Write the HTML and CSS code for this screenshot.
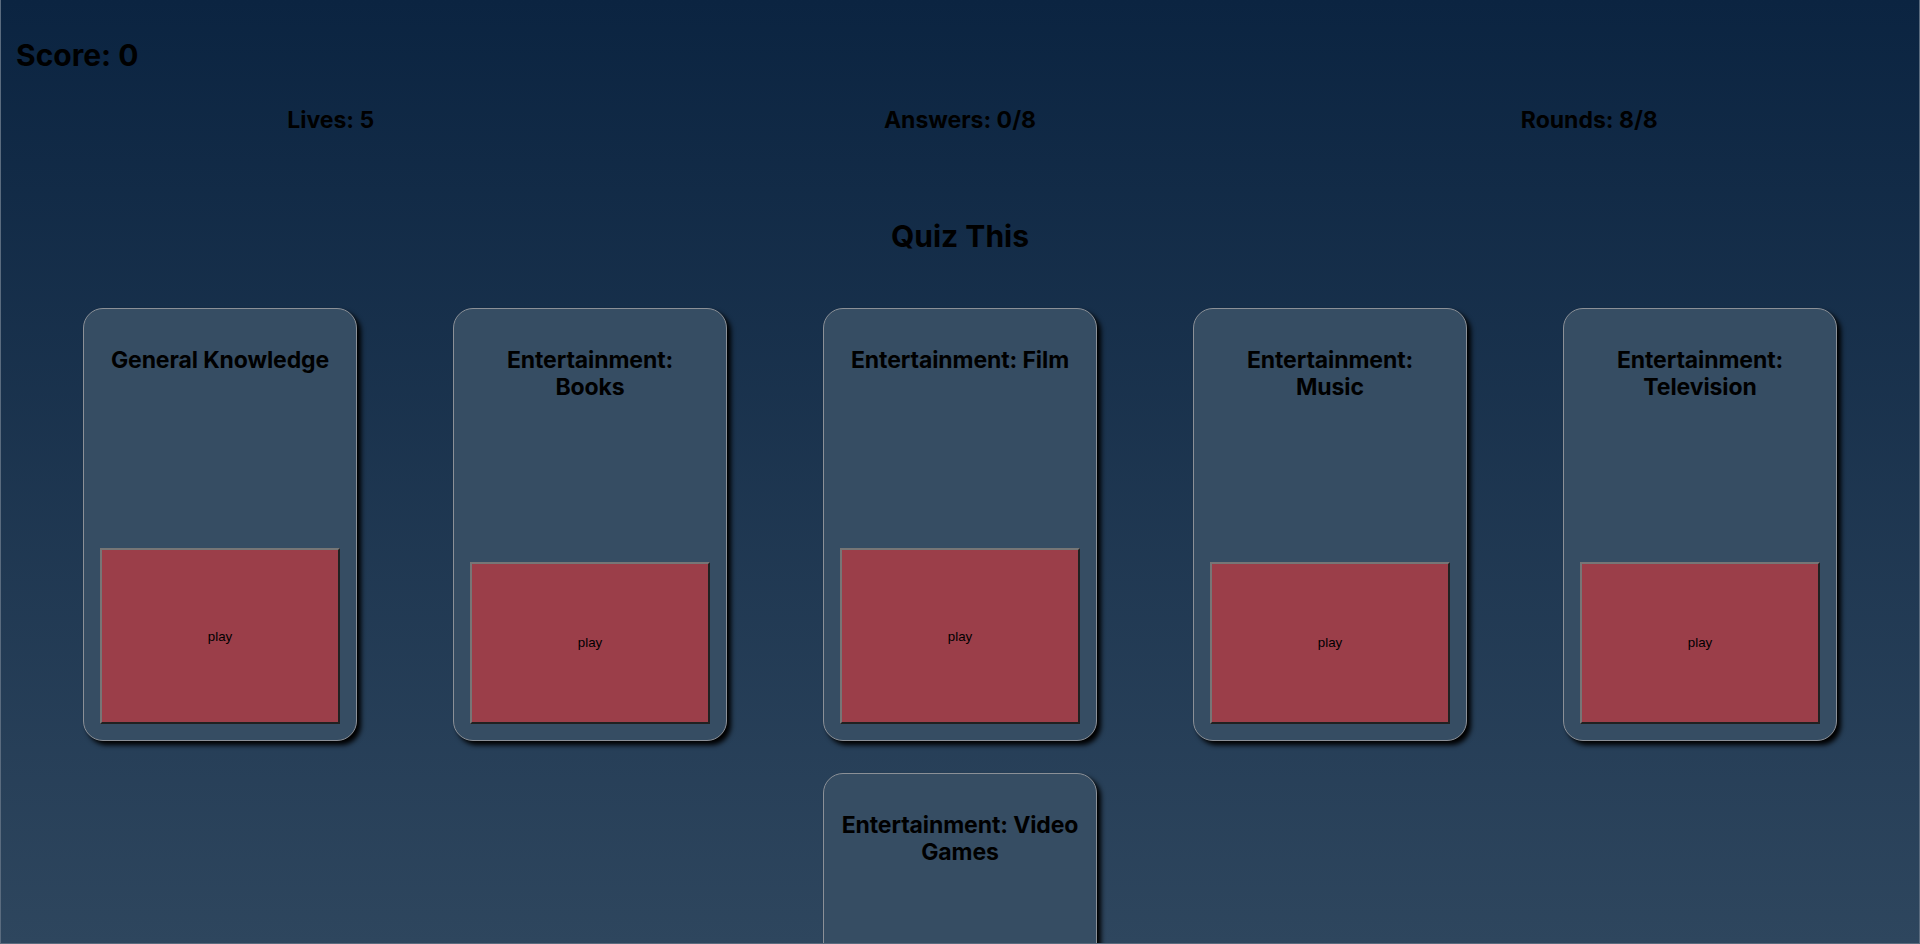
FILE: index.html
```html
<!DOCTYPE html>
<html lang="en">
<head>
<meta charset="utf-8">
<title>Quiz This</title>
<link rel="stylesheet" href="styles.css">
</head>
<body>
<div class="app">
  <h1 class="score">Score: 0</h1>
  <div class="stats">
    <h2 class="stat">Lives: 5</h2>
    <h2 class="stat">Answers: 0/8</h2>
    <h2 class="stat">Rounds: 8/8</h2>
  </div>
  <h1 class="title">Quiz This</h1>
  <div class="cards">
    <div class="card"><h2 class="card-title">General Knowledge</h2><button class="play">play</button></div>
    <div class="card"><h2 class="card-title">Entertainment: Books</h2><button class="play">play</button></div>
    <div class="card"><h2 class="card-title">Entertainment: Film</h2><button class="play">play</button></div>
    <div class="card"><h2 class="card-title">Entertainment:<br>Music</h2><button class="play">play</button></div>
    <div class="card"><h2 class="card-title">Entertainment: Television</h2><button class="play">play</button></div>
    <div class="card"><h2 class="card-title">Entertainment: Video Games</h2><button class="play">play</button></div>
  </div>
</div>
<div class="frame"></div>
</body>
</html>
```

FILE: styles.css
```css
html {
  background: linear-gradient(to bottom, #0b2441 0%, #2e465e 100%) fixed;
  min-height: 100%;
}
body {
  margin: 0;
  font-family: Inter, "Noto Sans", sans-serif;
  color: #000;
}
.app {
  padding: 8px 16px;
}
.score {
  font-size: 30px;
  font-weight: 700;
  margin: 29px 0 0 0;
  line-height: 37px;
}
.stats {
  display: flex;
  margin-top: 32px;
}
.stat {
  flex: 1;
  text-align: center;
  font-size: 23px;
  font-weight: 700;
  margin: 0;
  line-height: 29px;
}
.title {
  text-align: center;
  font-size: 30px;
  font-weight: 700;
  margin: 83px 0 0 0;
  line-height: 36px;
}
.cards {
  display: flex;
  flex-wrap: wrap;
  justify-content: center;
  margin: 38px -16px 0;
}
.card {
  box-sizing: border-box;
  width: 274px;
  height: 433px;
  margin: 16px 48px;
  padding: 16px;
  border: 1px solid #8b9097;
  border-radius: 20px;
  background: #364d63;
  box-shadow: 4px 4px 5px #000;
  display: flex;
  flex-direction: column;
}
.card-title {
  flex: 1 1 auto;
  margin: 22px 0 19px;
  font-size: 23px;
  letter-spacing: -0.1px;
  font-weight: 700;
  text-align: center;
  line-height: 27px;
}
.play {
  flex: 1 1 auto;
  background-color: #9b3e49;
  font-family: "Liberation Sans", Arial, sans-serif;
  font-size: 13.33px;
  color: #000;
  padding: 1px 6px;
  border: 2px outset #767676;
}
.frame {
  position: fixed;
  inset: 0;
  border-left: 1px solid #5a6b7e;
  border-right: 1px solid #5a6b7e;
  border-bottom: 1px solid #5a6b7e;
  pointer-events: none;
}
```
